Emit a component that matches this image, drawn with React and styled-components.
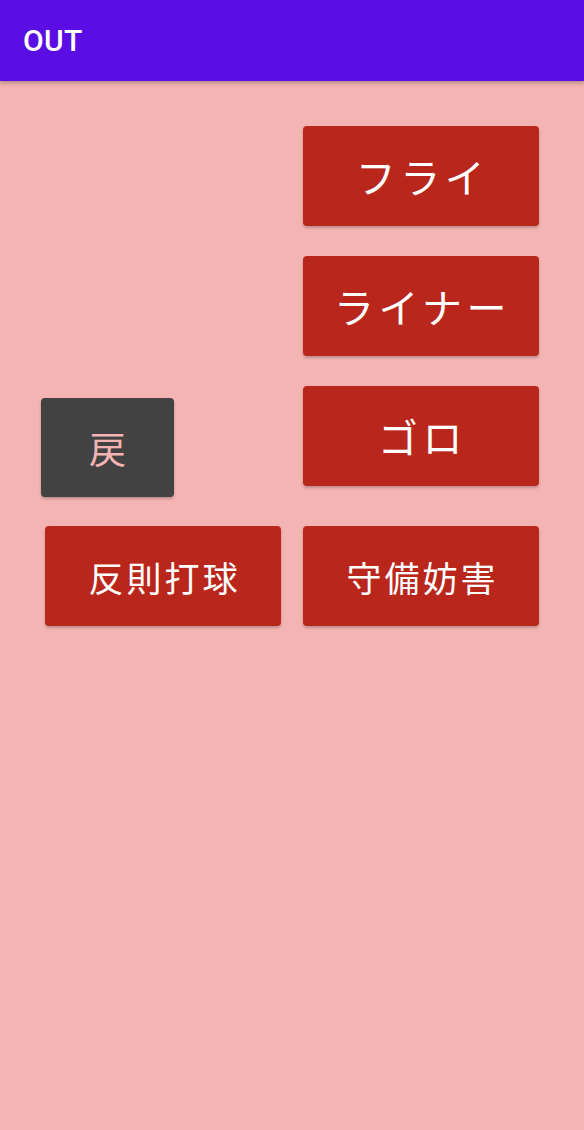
import React from 'react';
import styled, { createGlobalStyle } from 'styled-components';

const GlobalStyle = createGlobalStyle`
  html, body {
    margin: 0;
    padding: 0;
    background: #f4b4b3;
  }
  body {
    font-family: Roboto, "Noto Sans CJK JP", sans-serif;
  }
`;

const Screen = styled.div`
  width: 584px;
  min-height: 1130px;
  background: #f4b4b3;
`;

const AppBar = styled.header`
  height: 81px;
  background: #5a0ee3;
  display: flex;
  align-items: center;
  padding: 0 23px;
  box-shadow: 0 2px 4px #00000040;
  position: relative;
  z-index: 1;
`;

const Title = styled.h1`
  margin: 0;
  color: #fff;
  font-family: Roboto, sans-serif;
  font-weight: 500;
  font-size: 30px;
  letter-spacing: 0.3px;
`;

const Board = styled.main`
  display: grid;
  grid-template-columns: 236px 236px;
  grid-template-rows: repeat(4, 100px);
  column-gap: 22px;
  row-gap: 30px;
  padding: 45px 0 0 45px;
`;

const Button = styled.button`
  grid-column: ${(p) => p.col};
  grid-row: ${(p) => p.row};
  margin-top: ${(p) => p.shift || 0}px;
  border: 0;
  border-radius: 4px;
  background: #b9271c;
  color: #fff;
  font-family: "Noto Sans CJK JP", sans-serif;
  font-size: ${(p) => (p.kana ? 40 : 35)}px;
  letter-spacing: ${(p) => (p.kana ? 4.5 : 3)}px;
  display: flex;
  align-items: center;
  justify-content: center;
  padding: 0 0 0 3px;
  box-shadow: 0 2px 3px #00000038;
  width: 236px;
  height: 100px;
`;

const BackButton = styled(Button)`
  background: #424242;
  color: #f4b4b3;
  width: 133px;
  height: 99px;
  margin-left: -4px;
  font-size: 37px;
`;

export default function App() {
	return (
		<Screen>
			<GlobalStyle />
			<AppBar>
				<Title>OUT</Title>
			</AppBar>
			<Board>
				<Button col={2} row={1} kana>フライ</Button>
				<Button col={2} row={2} kana>ライナー</Button>
				<Button col={2} row={3} kana>ゴロ</Button>
				<BackButton col={1} row={3} shift={12}>戻</BackButton>
				<Button col={1} row={4} shift={10}>反則打球</Button>
				<Button col={2} row={4} shift={10}>守備妨害</Button>
			</Board>
		</Screen>
	);
}
